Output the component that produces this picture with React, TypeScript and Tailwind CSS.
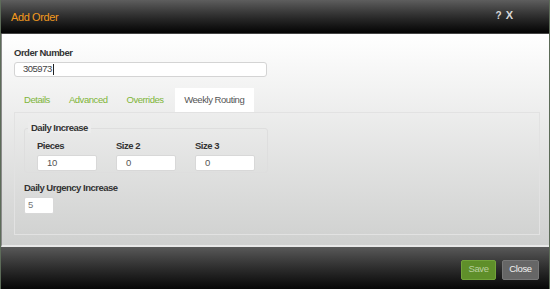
import React from "react";

const font = { fontFamily: '"Liberation Sans", Arial, sans-serif' };

const label = "text-[9.5px] font-bold text-[#333] leading-[11px] tracking-[-0.5px]";

function Input({ value, w }: { value: string; w: string }) {
  return (
    <div className={`${w} h-[16px] bg-white border border-[#d8d8d8] rounded-[2px] flex items-center pl-[9px] text-[9.5px] tracking-[-0.4px] text-[#555]`}>
      {value}
    </div>
  );
}

export default function App() {
  return (
    <div className="w-[550px] h-[289px] bg-[#5c6b58] flex" style={font}>
      <div className="ml-[1px] w-[548px] h-full flex flex-col">
        <div className="h-[34px] shrink-0 bg-gradient-to-b from-[#5e5e5e] to-[#050505] flex items-center justify-between pl-[10px] pr-[36px] border-b border-[#444]">
          <span className="text-[11px] tracking-[-0.4px] text-[#f39a1e] pt-[1px]">Add Order</span>
          <span className="text-[10px] font-bold text-[#d8d8d8] flex gap-[4px] items-center -mt-[3px]">
            <span>?</span>
            <span className="text-[11px]">X</span>
          </span>
        </div>
        <div className="flex-1 bg-gradient-to-b from-[#ffffff] to-[#cfd0cf] border-l border-[#8a8a8a] pl-[12px] pr-[10px] pt-[13px] border-b-2 border-b-[#e8e8e8]">
          <div className={label}>Order Number</div>
          <div className="mt-[4px] w-[253px] h-[15px] bg-white border border-[#d4d4d4] rounded-[3px] flex items-center pl-[8px] text-[9.5px] tracking-[-0.5px] text-[#444]">
            305973<span className="w-[1px] h-[11px] bg-[#222] ml-[1px]" />
          </div>
          <div className="mt-[11px] flex h-[24px] items-stretch pl-[10px] text-[9.5px] tracking-[-0.45px]">
            <div className="flex items-center text-[#7fb539] pr-[19px]">Details</div>
            <div className="flex items-center text-[#7fb539] pr-[19px]">Advanced</div>
            <div className="flex items-center text-[#7fb539] pr-[11px]">Overrides</div>
            <div className="flex items-center bg-white text-[#555] w-[79px] justify-center">Weekly Routing</div>
          </div>
          <div className="w-[526px] h-[123px] border border-[#e2e2e2] pl-[9px] pt-[9px]">
            <div className="relative w-[244px] h-[45px] border border-[#dedede] rounded-[3px] mt-[6px]">
              <span className={`absolute -top-[7px] left-[3px] px-[3px] bg-[#ececec] ${label}`}>Daily Increase</span>
              <div className="flex gap-[19px] pl-[12px] pt-[11px]">
                <div className="flex flex-col gap-[4px]">
                  <span className={label}>Pieces</span>
                  <Input value="10" w="w-[60px]" />
                </div>
                <div className="flex flex-col gap-[4px]">
                  <span className={label}>Size 2</span>
                  <Input value="0" w="w-[60px]" />
                </div>
                <div className="flex flex-col gap-[4px]">
                  <span className={label}>Size 3</span>
                  <Input value="0" w="w-[60px]" />
                </div>
              </div>
            </div>
            <div className={`mt-[9px] ${label}`}>Daily Urgency Increase</div>
            <div className="mt-[4px] w-[30px] h-[17px] bg-white border border-[#d8d8d8] rounded-[2px] flex items-center pl-[3px] text-[9.5px] text-[#777]">5</div>
          </div>
        </div>
        <div className="h-[42px] shrink-0 bg-gradient-to-b from-[#595959] to-[#080808] flex items-center justify-end gap-[6px] pr-[10px] pt-[3px]">
          <div className="w-[35px] h-[20px] bg-[#5f8f2a] border border-[#72a33a] rounded-[2px] flex items-center justify-center text-[9.5px] tracking-[-0.4px] text-[#b9cfa0]">Save</div>
          <div className="w-[37px] h-[20px] bg-[#666] border border-[#777] rounded-[2px] flex items-center justify-center text-[9.5px] tracking-[-0.4px] text-[#f0f0f0]">Close</div>
        </div>
      </div>
    </div>
  );
}
